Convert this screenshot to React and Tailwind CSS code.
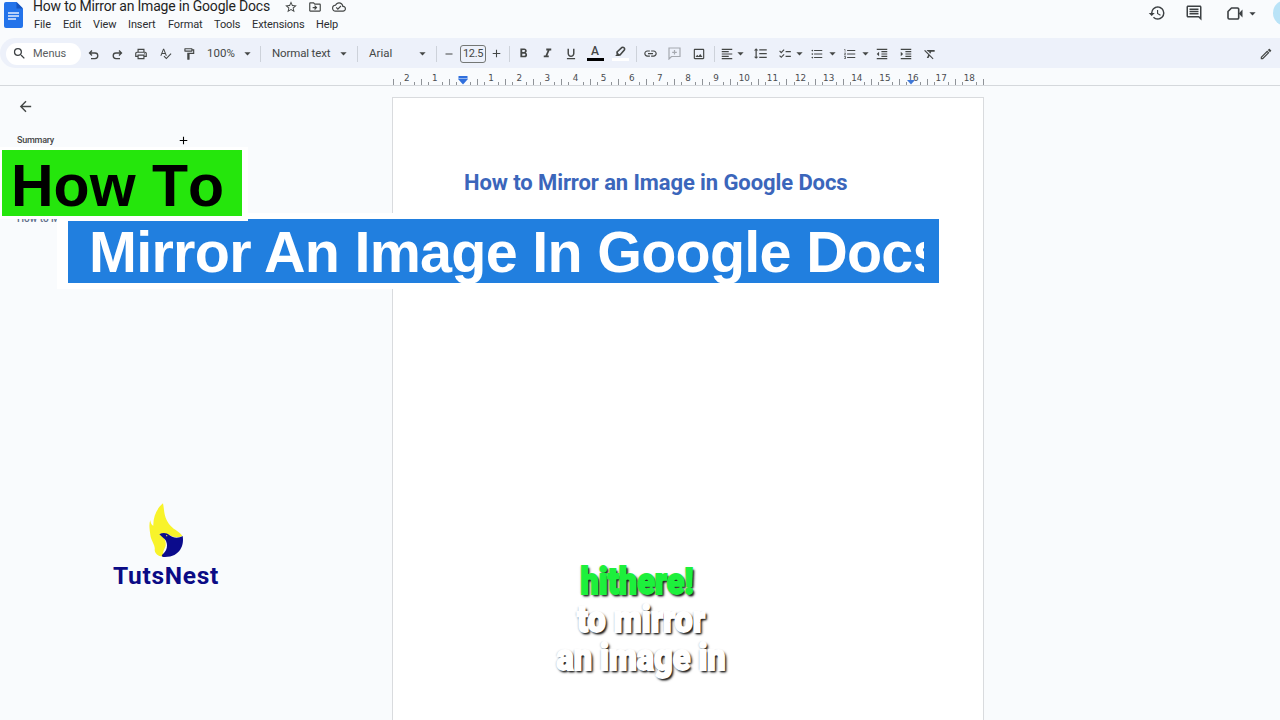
import {
  MdArrowBack,
  MdArrowDropDown,
  MdAdd,
  MdChecklist,
  MdFormatAlignLeft,
  MdFormatBold,
  MdFormatClear,
  MdFormatIndentDecrease,
  MdFormatIndentIncrease,
  MdFormatItalic,
  MdFormatLineSpacing,
  MdFormatListBulleted,
  MdFormatListNumbered,
  MdFormatUnderlined,
  MdHistory,
  MdLink,
  MdOutlineCloudDone,
  MdOutlineDriveFileMove,
  MdOutlineEdit,
  MdOutlineFormatPaint,
  MdOutlineImage,
  MdOutlineInsertComment,
  MdOutlinePrint,
  MdRemove,
  MdSearch,
  MdSpellcheck,
  MdStarBorder,
} from "react-icons/md";

const menus = [
  { label: "File", width: "w-[29px]" },
  { label: "Edit", width: "w-[30px]" },
  { label: "View", width: "w-[35px]" },
  { label: "Insert", width: "w-[40px]" },
  { label: "Format", width: "w-[46px]" },
  { label: "Tools", width: "w-[38px]" },
  { label: "Extensions", width: "w-[64px]" },
  { label: "Help", width: "w-[30px]" },
];

function Tool({ width, children }) {
  return <div className={`flex h-full shrink-0 items-center justify-center ${width}`}>{children}</div>;
}

function Caret({ width = "w-[18px]" }) {
  return (
    <Tool width={width}>
      <MdArrowDropDown size={15} className="shrink-0" />
    </Tool>
  );
}

function Divider({ width }) {
  return (
    <Tool width={width}>
      <div className="h-4 w-px bg-[#cdd2da]" />
    </Tool>
  );
}

function UndoArrow({ className }) {
  return (
    <svg width="11" height="11" viewBox="0 0 11 11" fill="none" stroke="currentColor" strokeWidth="1.3" className={className}>
      <path d="M4 1.500L1.500 4L4 6.500M1.500 4H7A2.800 2.800 0 0 1 7 9.600H3" />
    </svg>
  );
}

function DocsLogo() {
  return (
    <svg width="19" height="26" viewBox="0 0 19 26">
      <path d="M2 0H12.5L19 6.5V24a2 2 0 0 1-2 2H2a2 2 0 0 1-2-2V2a2 2 0 0 1 2-2z" fill="#2373ea" />
      <path d="M12.5 0L19 6.5H12.5z" fill="#1554c0" />
      <path d="M4 11H15M4 14H15M4 17H12" stroke="#e8f0fe" strokeWidth="1.5" />
    </svg>
  );
}

function Header() {
  return (
    <div className="flex h-[38px] pl-1">
      <div className="w-[29px] pt-[2px]">
        <DocsLogo />
      </div>
      <div className="flex-1">
        <div className="flex h-[16px] items-start">
          <div className="w-[251px] whitespace-nowrap text-[14px] leading-[12px] tracking-[-0.2px] text-[#1f1f1f]">
            How to Mirror an Image in Google Docs
          </div>
          <div className="flex gap-[10px] text-[#444746]">
            <MdStarBorder size={14} />
            <MdOutlineDriveFileMove size={14} />
            <MdOutlineCloudDone size={14} />
          </div>
        </div>
        <div className="flex pl-px text-[11px] leading-[17px] tracking-[-0.1px] text-[#2b2d30]">
          {menus.map((m) => (
            <div key={m.label} className={m.width}>
              {m.label}
            </div>
          ))}
        </div>
      </div>
      <div className="flex h-[26px] items-center text-[#3c4043]">
        <Tool width="w-[26px]">
          <MdHistory size={18} />
        </Tool>
        <Tool width="w-[48px]">
          <MdOutlineInsertComment size={18} />
        </Tool>
        <Tool width="w-[34px]">
          <svg width="16" height="13" viewBox="0 0 16 13" fill="none">
            <path d="M4.500 1H10.500a1.200 1.200 0 0 1 1.200 1.200V10.800a1.200 1.200 0 0 1-1.200 1.200H2.200A1.200 1.200 0 0 1 1 10.800V4.500z" stroke="currentColor" strokeWidth="1.600" strokeLinejoin="round" />
            <path d="M11.700 6.500L15.500 2.500V10.500z" fill="currentColor" />
          </svg>
        </Tool>
        <Caret width="w-[1px]" />
        <div className="ml-[20px] h-[26px] w-[7px] overflow-hidden">
          <div className="h-[26px] w-[26px] rounded-full bg-[#b9e3f7]" />
        </div>
      </div>
    </div>
  );
}

function Toolbar() {
  return (
    <div className="flex h-[30px] items-center rounded-l-full bg-[#edf1fa] pt-px text-[11.5px] text-[#444746]">
      <div className="ml-[6px] flex h-[22px] w-[75px] shrink-0 items-center gap-[6px] rounded-full bg-white pl-[6px] text-[11px] text-[#5a5d61]">
        <MdSearch size={15} className="text-[#3c4043]" />
        <span className="pt-[2px]">Menus</span>
      </div>
      <Tool width="w-[24px]"><UndoArrow className="mt-[2px]" /></Tool>
      <Tool width="w-[24px]"><UndoArrow className="mt-[2px] -scale-x-100" /></Tool>
      <Tool width="w-[24px]"><MdOutlinePrint size={14} /></Tool>
      <Tool width="w-[24px]"><MdSpellcheck size={13} /></Tool>
      <Tool width="w-[23px]"><MdOutlineFormatPaint size={14} /></Tool>
      <div className="w-[38px] pl-[7px]">100%</div>
      <Caret />
      <Divider width="w-[8px]" />
      <div className="w-[70px] whitespace-nowrap pl-[8px] tracking-[-0.15px]">Normal text</div>
      <Caret />
      <Divider width="w-[10px]" />
      <div className="w-[51px] pl-[7px]">Arial</div>
      <Caret />
      <Divider width="w-[10px]" />
      <Tool width="w-[16px]"><MdRemove size={12} /></Tool>
      <div className="ml-[3px] flex h-[18px] w-[26px] shrink-0 items-center justify-center rounded-[3px] border border-[#747775] text-[11px] tracking-[-0.3px]">
        <span className="pt-px">12.5</span>
      </div>
      <Tool width="w-[20px]"><MdAdd size={13} /></Tool>
      <Divider width="w-[6px]" />
      <Tool width="w-[22px]"><MdFormatBold size={15} /></Tool>
      <Tool width="w-[26px]"><MdFormatItalic size={15} /></Tool>
      <Tool width="w-[22px]"><MdFormatUnderlined size={14} /></Tool>
      <Tool width="w-[26px]">
        <div className="flex w-[17px] flex-col items-center border-b-[3px] border-black pb-px text-[12px] font-medium leading-[11px]">
          A
        </div>
      </Tool>
      <Tool width="w-[24px]">
        <div className="flex w-[17px] flex-col items-center border-b-[3px] border-white">
          <svg width="12" height="12" viewBox="0 0 12 12" fill="none">
            <path d="M3 6L8 1.500Q9 .8 10 1.800T10.300 4L6 9H3.500z" stroke="currentColor" strokeWidth="1.600" />
            <path d="M3 6L6 9L4.800 10H1L2.800 8.500z" fill="currentColor" />
          </svg>
        </div>
      </Tool>
      <Divider width="w-[8px]" />
      <Tool width="w-[20px]"><MdLink size={15} /></Tool>
      <Tool width="w-[28px]">
        <svg width="13" height="13" viewBox="0 0 13 13" fill="none" stroke="#a5a9b0" strokeWidth="1.200">
          <path d="M1 12V1H12V9.500H3.500zM6.500 3V7.600M4.200 5.300H8.800" />
        </svg>
      </Tool>
      <Tool width="w-[22px]"><MdOutlineImage size={14} /></Tool>
      <Divider width="w-[8px]" />
      <Tool width="w-[18px]"><MdFormatAlignLeft size={14} className="shrink-0" /></Tool>
      <Caret width="w-[8px]" />
      <Tool width="w-[32px]"><MdFormatLineSpacing size={15} /></Tool>
      <Tool width="w-[17px]"><MdChecklist size={14} /></Tool>
      <Caret width="w-[12px]" />
      <Tool width="w-[24px]"><MdFormatListBulleted size={14} /></Tool>
      <Caret width="w-[6px]" />
      <Tool width="w-[30px]"><MdFormatListNumbered size={14} /></Tool>
      <Caret width="w-[1px]" />
      <Tool width="w-[32px]"><MdFormatIndentDecrease size={14} /></Tool>
      <Tool width="w-[16px]"><MdFormatIndentIncrease size={14} /></Tool>
      <Tool width="w-[32px]"><MdFormatClear size={14} /></Tool>
      <div className="flex-1" />
      <Tool width="w-[28px]"><MdOutlineEdit size={14} /></Tool>
    </div>
  );
}

const ORIGIN = 463;
const UNIT = 28.13;

function Ruler() {
  const ticks = [];
  for (let q = -10; q <= 74; q++) {
    if (q % 4 !== 0) ticks.push(q);
  }
  const numbers = [];
  for (let n = -2; n <= 18; n++) {
    if (n !== 0) numbers.push(n);
  }
  return (
    <div className="h-[18px] border-b border-[#d5d8dc]">
      <svg width="1280" height="17" viewBox="0 0 1280 17">
        {ticks.map((q) => (
          <rect
            key={q}
            x={Math.round(ORIGIN + (q * UNIT) / 4)}
            y={q % 2 === 0 ? 11 : 14}
            width="1"
            height={q % 2 === 0 ? 6 : 3}
            fill="#8f9398"
          />
        ))}
        {numbers.map((n) => (
          <text key={n} x={ORIGIN + n * UNIT} y="13" fontSize="8.8" fontFamily="DejaVu Sans" textAnchor="middle" fill="#4a4d51">
            {Math.abs(n)}
          </text>
        ))}
        <path d="M458.500 8H467.500V11.500L463 16.500L458.500 11.500z" fill="#2f6fdd" />
        <path d="M458.500 10.500H467.500" stroke="#bcd2f8" strokeWidth=".7" />
        <path d="M907 12H915L911 16.500z" fill="#3f78d8" />
      </svg>
    </div>
  );
}

function Sidebar() {
  return (
    <div className="w-[392px] shrink-0 text-[#444746]">
      <div className="pl-[17px] pt-[12px]">
        <MdArrowBack size={17} />
      </div>
      <div className="mt-[17px] flex h-[16px] items-center pl-[17px]">
        <div className="w-[160px] pt-[2px] text-[9px] font-medium tracking-[-0.25px]">Summary</div>
        <MdAdd size={13} className="text-black" />
      </div>
    </div>
  );
}

function TutsNest() {
  return (
    <div className="absolute left-[106px] top-[503px] flex w-[120px] flex-col items-center">
      <svg width="37" height="55" viewBox="175 40 111 165">
        <path d="M220 41C224 60 222 80 238 103C250 119 264 122 278 138C268 146 250 143 240 136C228 130 218 130 209 134C222 142 230 150 228 168C225 180 217 184 222 200C207 202 196 193 195 181C198 168 184 153 182 136C180 118 177 105 182 91C183 103 188 107 191 108C190 82 202 55 220 41z" fill="#f8f32b" />
        <path d="M209 134C218 129 230 128 240 137C250 145 266 147 279 139C284 165 272 203 224 202C216 202 214 198 220 193C237 179 235 154 221 145z" fill="#0b0b8c" />
        <circle cx="231" cy="138" r="2" fill="#f8f32b" />
      </svg>
      <div className="text-[24.5px] font-bold leading-[36px] tracking-[0.7px] text-[#0b0b85]">TutsNest</div>
    </div>
  );
}

function TitleBanner() {
  return (
    <>
      <div className="absolute left-[57px] top-[213px] h-[76px] w-[889px] bg-white" />
      <div className="absolute left-[68px] top-[219px] h-[64px] w-[871px] bg-[#217fdf] font-['Liberation_Sans',sans-serif]">
        <div className="h-full w-[856px] overflow-hidden whitespace-nowrap pl-[21px] text-[57.5px] font-bold leading-[67px] tracking-[-0.72px] text-white">
          Mirror An Image In Google Docs
        </div>
      </div>
      <div className="absolute left-0 top-[147px] h-[74px] w-[248px] bg-white" />
      <div className="absolute left-[2px] top-[150px] h-[66px] w-[240px] whitespace-nowrap bg-[#25e60c] pl-[9px] font-['Liberation_Sans',sans-serif] text-[59px] font-bold leading-[73px] text-black [font-kerning:none]">
        How To
      </div>
      {/* outline entry peeking out below the banner */}
      <div className="absolute left-0 top-[219px] h-[4px] w-[57px] overflow-hidden bg-[#f9fbfd] pl-[17px] text-[10px] font-medium leading-[10px] text-[#5f6f8a]">
        <div className="-mt-[5px] whitespace-nowrap">How to M</div>
      </div>
    </>
  );
}

function Caption() {
  return (
    <div className="absolute left-[491px] top-[563px] w-[300px] scale-x-[0.9] whitespace-nowrap text-center text-[36px] font-black leading-[38px] text-white [-webkit-text-stroke:1.8px_currentColor] [text-shadow:2px_2px_2px_#222,2px_2px_3px_#333,-1px_0px_2px_#bbb]">
      <div className="-ml-[9px] text-[#1df03c]">hithere!</div>
      <div>to mirror</div>
      <div>an image in</div>
    </div>
  );
}

export default function App() {
  return (
    <div className="relative flex h-[720px] w-[1280px] flex-col overflow-hidden bg-[#f9fbfd] font-[Roboto,sans-serif]">
      <Header />
      <Toolbar />
      <Ruler />
      <div className="flex flex-1">
        <Sidebar />
        <div className="mt-[11px] w-[592px] border border-b-0 border-[#d9dbde] bg-white pl-[71px] pt-[69px]">
          <h1 className="whitespace-nowrap text-[22px] font-bold leading-[32px] tracking-[-0.09px] text-[#3b66bb]">
            How to Mirror an Image in Google Docs
          </h1>
        </div>
      </div>
      <TitleBanner />
      <TutsNest />
      <Caption />
    </div>
  );
}
